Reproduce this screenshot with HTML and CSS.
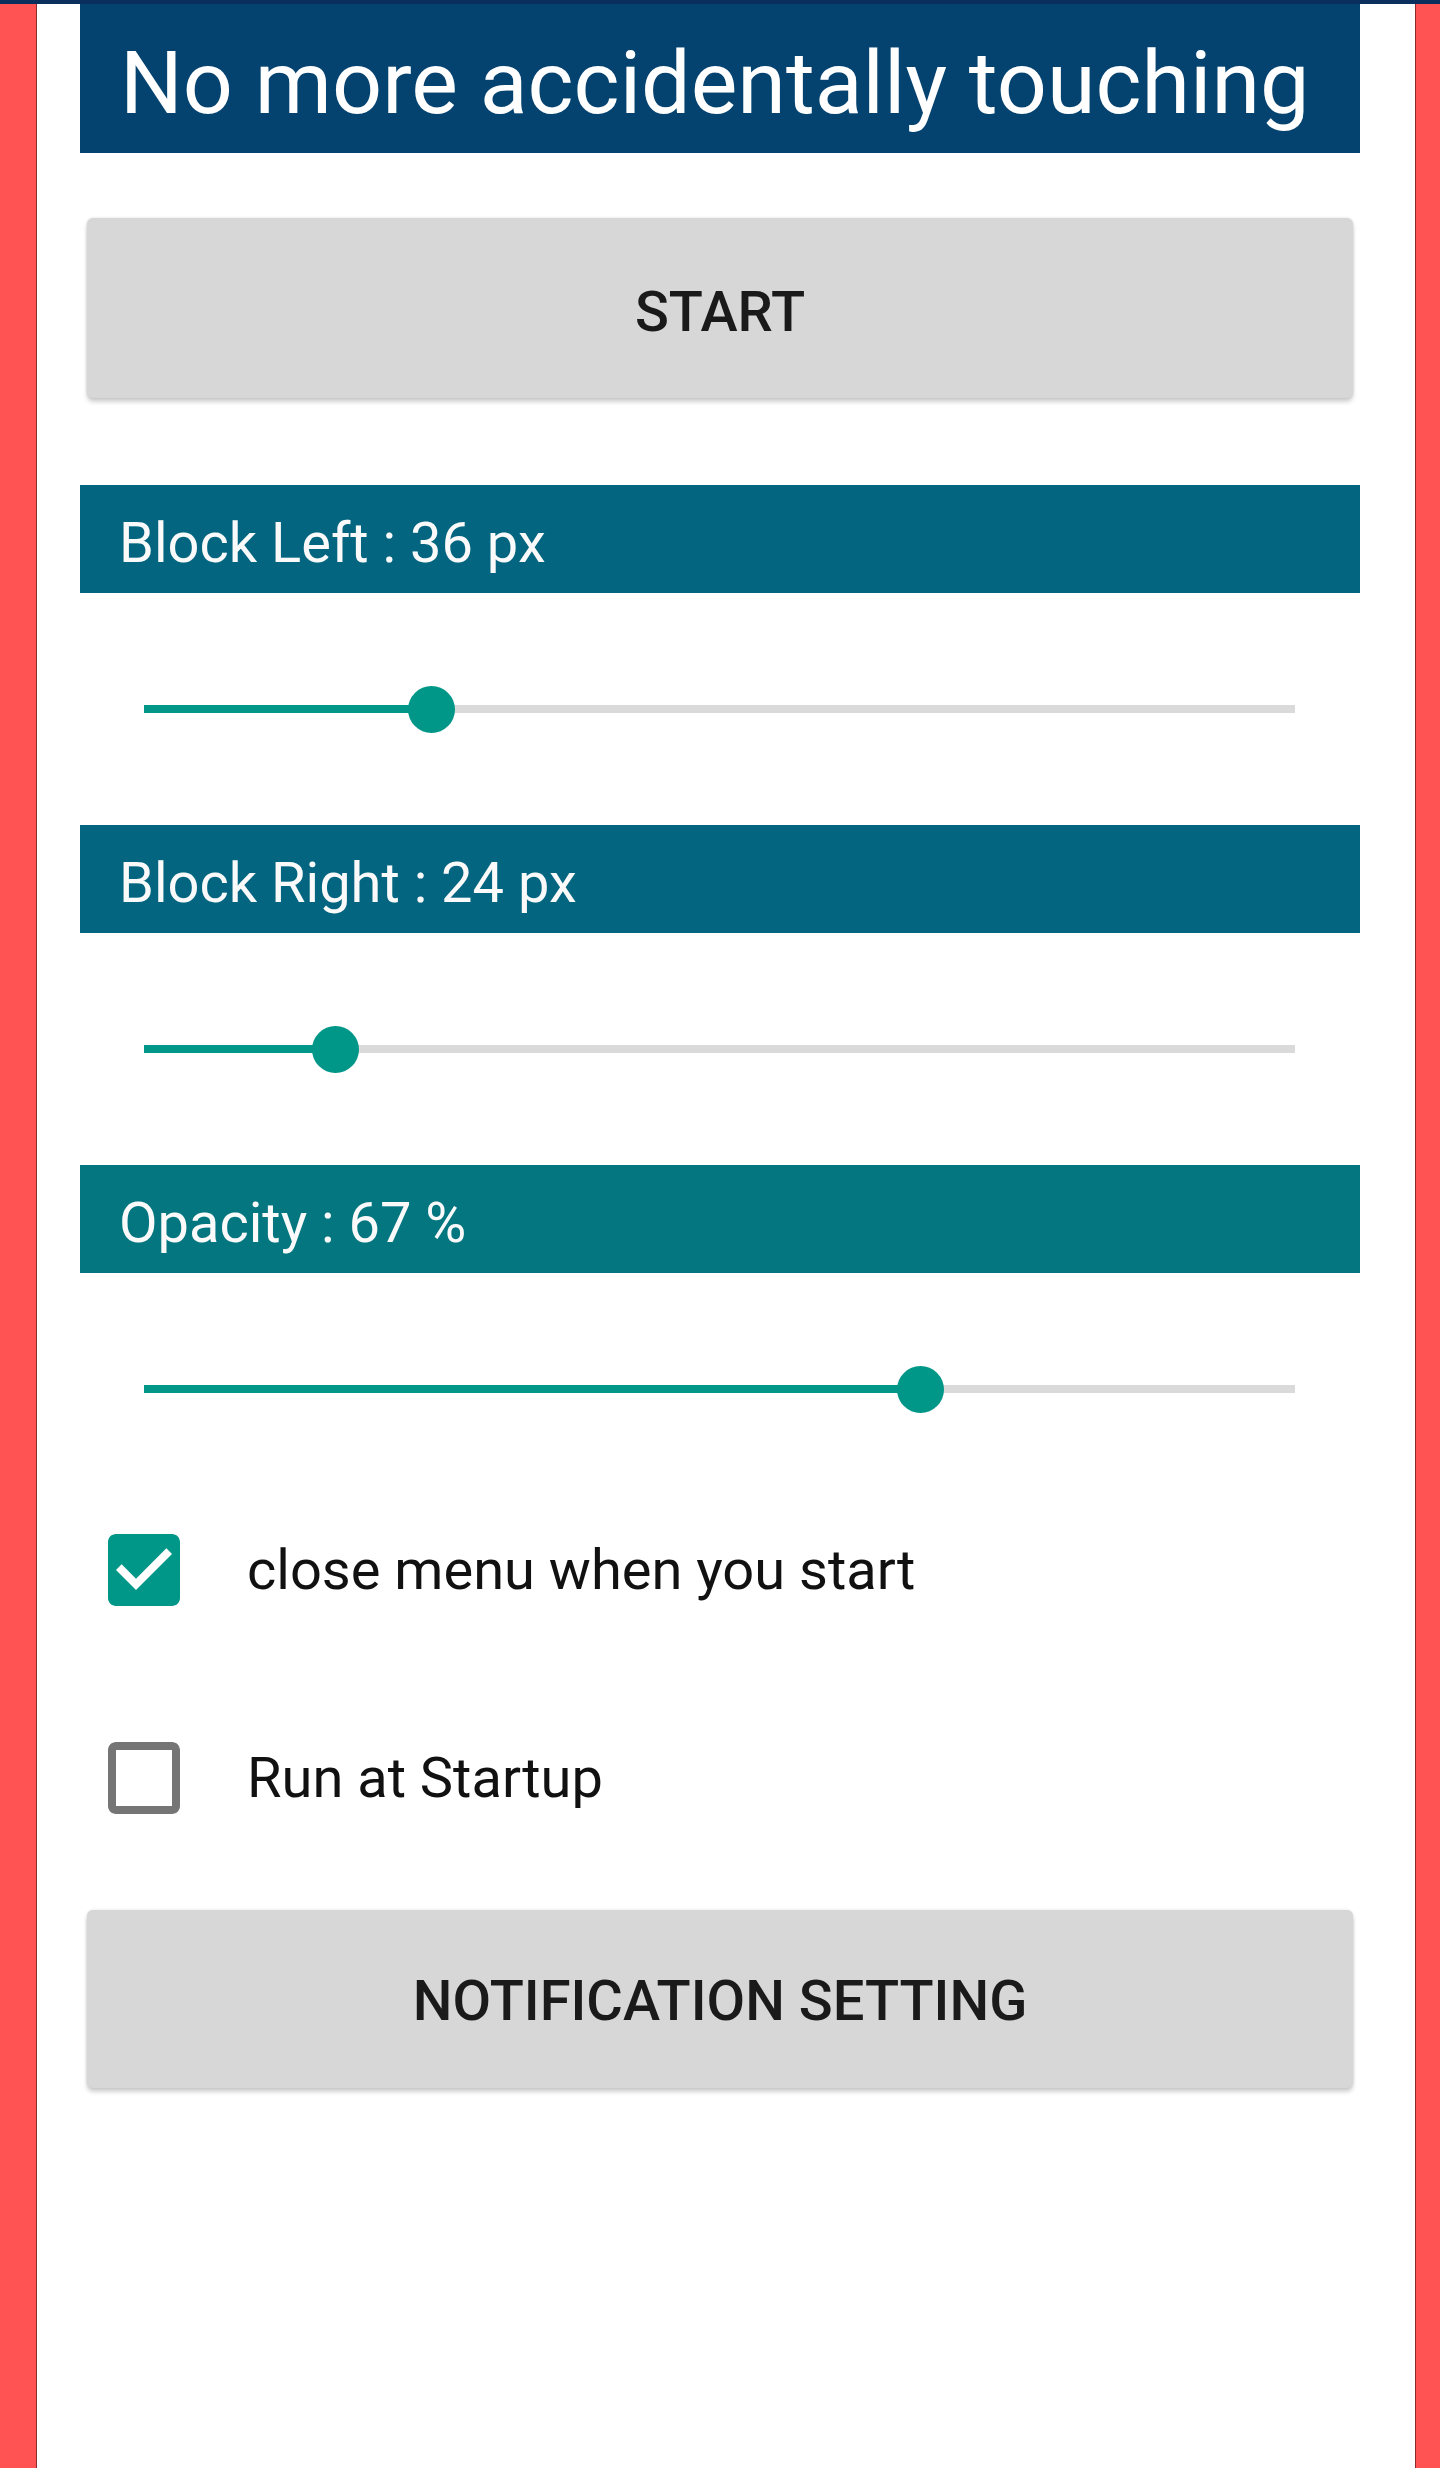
FILE: index.html
```html
<!DOCTYPE html>
<html>
<head>
<meta charset="utf-8" />
<title>No more accidentally touching</title>
<link rel="stylesheet" href="styles.css">
</head>

<body>
<div class="topline"></div>
<div class="page">
  <div class="edge edge-left"></div>

  <div class="screen">
    <div class="title">No more accidentally touching</div>

    <div class="btn btn-start">START</div>

    <!-- 滑块 1 -->
    <div class="label">Block Left : 36 px</div>
    <div class="slider">
      <div class="track">
        <div class="fill" style="width:25%"></div>
        <div class="thumb" style="left:25%"></div>
      </div>
    </div>

    <!-- 滑块 2 -->
    <div class="label">Block Right : 24 px</div>
    <div class="slider">
      <div class="track">
        <div class="fill" style="width:16.67%"></div>
        <div class="thumb" style="left:16.67%"></div>
      </div>
    </div>

    <!-- 滑块 3 -->
    <div class="label label-teal">Opacity : 67 %</div>
    <div class="slider">
      <div class="track">
        <div class="fill" style="width:67.5%"></div>
        <div class="thumb" style="left:67.5%"></div>
      </div>
    </div>

    <div class="checks">
      <div class="check-row">
        <svg class="box" viewBox="3 3 18 18"><path fill="#009688" d="M19 3H5c-1.11 0-2 .9-2 2v14c0 1.1.89 2 2 2h14c1.11 0 2-.9 2-2V5c0-1.1-.89-2-2-2zm-9 14l-5-5 1.41-1.41L10 14.17l7.59-7.59L19 8l-9 9z"/></svg>
        <span>close menu when you start</span>
      </div>
      <div class="check-row">
        <svg class="box" viewBox="3 3 18 18"><path fill="#757575" d="M19 5v14H5V5h14m0-2H5c-1.1 0-2 .9-2 2v14c0 1.1.9 2 2 2h14c1.1 0 2-.9 2-2V5c0-1.1-.9-2-2-2z"/></svg>
        <span>Run at Startup</span>
      </div>
    </div>

    <div class="btn btn-notify">NOTIFICATION SETTING</div>
  </div>

  <div class="edge edge-right"></div>
</div>
</body>
</html>
```

FILE: styles.css
```css
*{ padding:0; margin:0; box-sizing:border-box;}
body{ background:#fff; font-family:Roboto, "Liberation Sans", sans-serif;}

.topline{ height:4px; background:#0a2f5c;}
.page{ display:flex; min-height:2464px;}
.edge{ background:#ff5353;}
.edge-left{ width:37px; border-right:1px solid #8a2b2b;}
.edge-right{ width:25px; border-left:1px solid #8a2b2b;}

.screen{ flex:1; padding:0 55px 0 43px;}

.title{
  height:149px;
  padding:8px 0 0 40px;
  line-height:141px;
  font-size:88px;
  color:#fff;
  background:#04436f;
  white-space:nowrap;
}

.btn{
  margin:0 7px;
  height:180px;
  padding-top:8px;
  line-height:172px;
  text-align:center;
  font-size:56px;
  font-weight:500;
  color:#1a1a1a;
  background:#d7d7d7;
  border-radius:6px;
  box-shadow:0 4px 4px rgba(0,0,0,0.18), 0 0 3px rgba(0,0,0,0.12);
}
.btn-start{ margin-top:65px; margin-bottom:87px;}
.btn-notify{ margin-top:67px; height:178px; padding-top:5px; line-height:173px;}

.label{
  height:108px;
  padding:8px 0 0 39px;
  line-height:100px;
  font-size:56px;
  color:#fafafa;
  background:#03657f;
}
.label-teal{ background:#037680;}

.slider{ height:232px; padding:0 65px 0 64px; display:flex; align-items:center;}
.track{ position:relative; flex:1; height:8px; background:#dadada;}
.fill{ height:8px; background:#009688;}
.thumb{
  position:absolute;
  top:50%;
  width:47px;
  height:47px;
  margin:-23.5px 0 0 -23.5px;
  border-radius:50%;
  background:#009688;
}

.checks{ display:flex; flex-direction:column; gap:78px;}
.check-row{ height:130px; display:flex; align-items:center; padding-left:28px; font-size:56px; color:#111;}
.check-row .box{ width:72px; height:72px; margin-right:67px; flex:none;}
```
